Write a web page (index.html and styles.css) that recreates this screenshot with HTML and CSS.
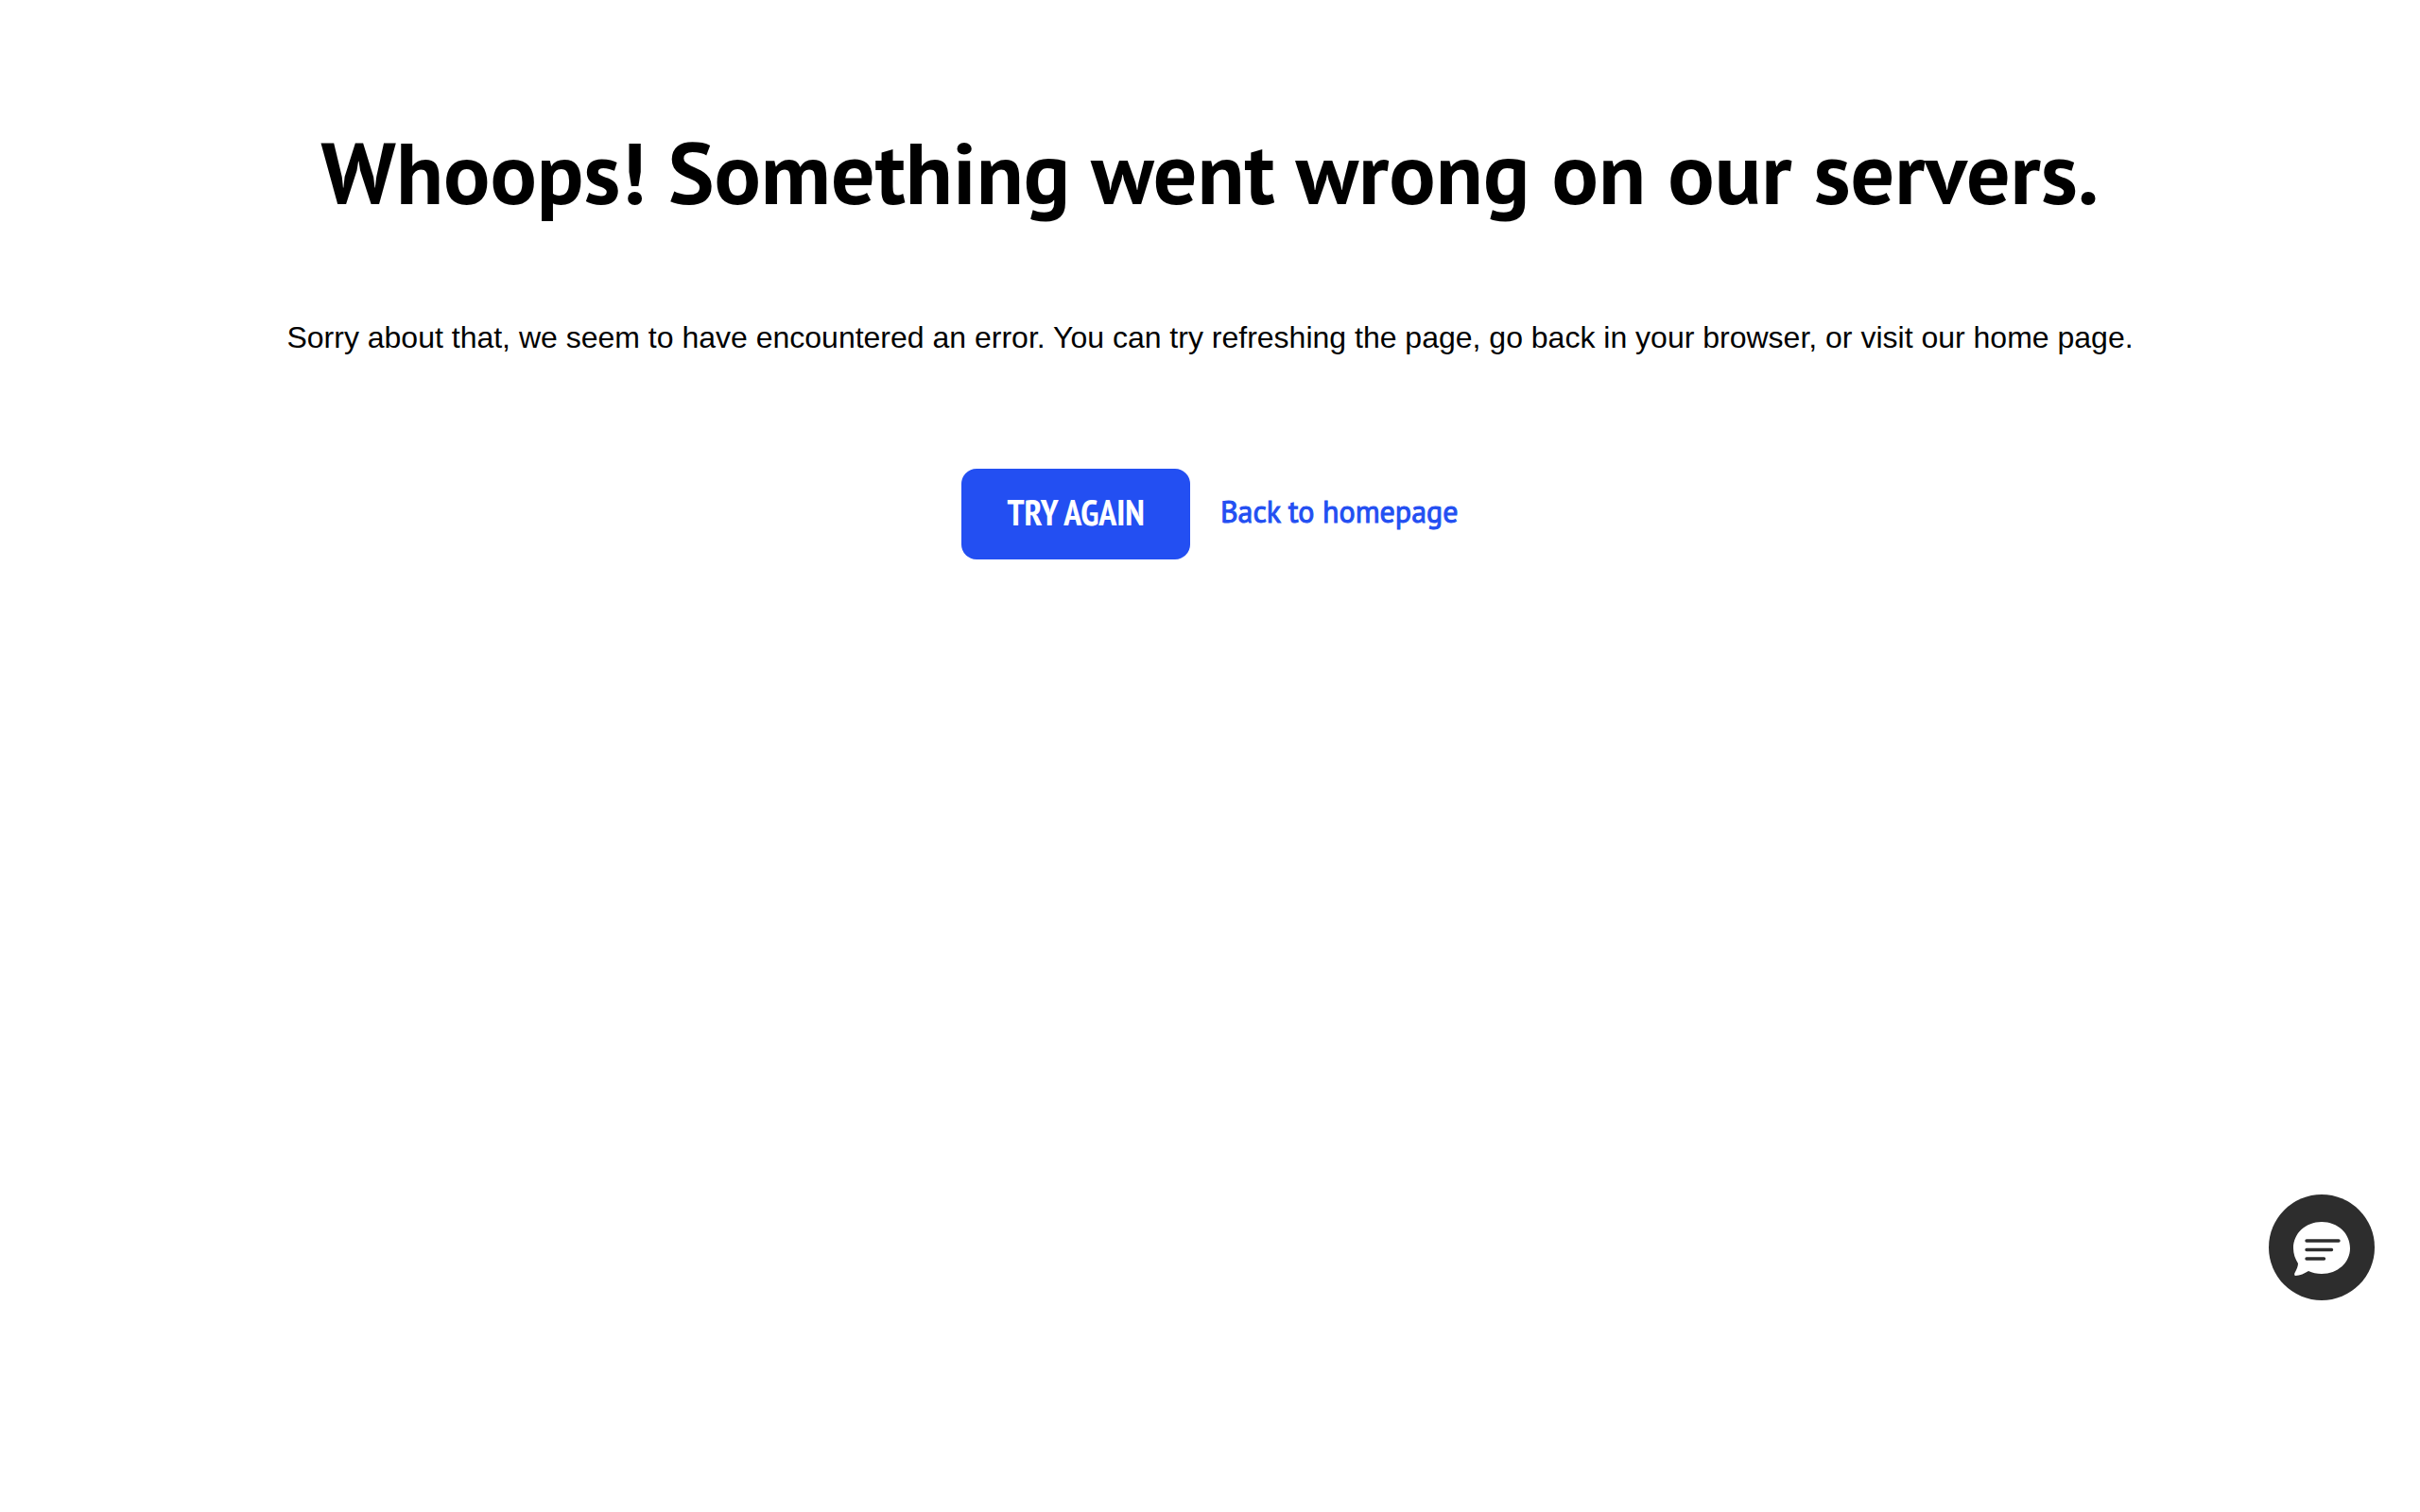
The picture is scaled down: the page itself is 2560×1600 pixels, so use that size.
FILE: index.html
```html
<!DOCTYPE html>
<html lang="en">
<head>
<meta charset="utf-8">
<meta name="viewport" content="width=device-width, initial-scale=1">
<title>Something went wrong</title>
<link rel="stylesheet" href="styles.css">
</head>
<body>
<main class="error-page">
  <h1 class="error-title">Whoops! Something went wrong on our servers.</h1>
  <p class="error-text">Sorry about that, we seem to have encountered an error. You can try refreshing the page, go back in your browser, or visit our home page.</p>
  <div class="error-actions">
    <button class="retry-button" type="button">TRY AGAIN</button>
    <a class="home-link" href="/">Back to homepage</a>
  </div>
</main>
<button class="chat-button" type="button" aria-label="Open chat">
  <svg class="chat-icon" viewBox="0 0 60 58" aria-hidden="true">
    <path fill="#fff" d="M30 0C47 0 60 12 60 28C60 43 47 55 30 55C25 55 20 54 16 52C12 54.500 7 57 2 57C1 56.500 1 55 1.500 54C3.500 50 5 47 5 44C2 39 0 34 0 28C0 12 13 0 30 0Z"/>
    <path fill="none" stroke="#2d2d2d" stroke-width="3.400" stroke-linecap="round" d="M14 20H48M14 29.500H40.500M14 39H32.500"/>
  </svg>
</button>
</body>
</html>
```
FILE: styles.css
```css
* {
  box-sizing: border-box;
}

body {
  margin: 0;
  background: #fff;
  color: #000;
  font-family: "Liberation Sans", Arial, sans-serif;
}

.error-page {
  display: flex;
  flex-direction: column;
  align-items: center;
  padding: 126px 48px 64px;
  text-align: center;
}

.error-title {
  margin: 0;
  font-family: "PT Sans", Lato, sans-serif;
  font-size: 92px;
  font-weight: 700;
  line-height: 112px;
}

.error-text {
  margin: 95px 0 0;
  font-size: 32px;
  line-height: 48px;
}

.error-actions {
  display: flex;
  align-items: center;
  gap: 32px;
  margin-top: 115px;
}

.retry-button {
  min-height: 96px;
  padding: 0 48px 5px;
  border: 0;
  border-radius: 16px;
  background: #234ff2;
  color: #fff;
  font-family: "PT Sans Narrow", "Roboto Condensed", "Open Sans Condensed", "PT Sans", sans-serif;
  font-size: 38px;
  font-weight: 700;
  cursor: pointer;
}

.home-link {
  padding-bottom: 6px;
  color: #234ff2;
  font-family: "PT Sans", Lato, sans-serif;
  font-size: 32px;
  font-weight: 400;
  line-height: 48px;
  text-decoration: none;
  -webkit-text-stroke: 1px currentColor;
}

.chat-button {
  position: fixed;
  right: 48px;
  bottom: 224px;
  display: grid;
  place-items: center;
  width: 112px;
  height: 112px;
  padding: 4px 0 0;
  border: 0;
  border-radius: 50%;
  background: #2d2d2d;
  cursor: pointer;
}

.chat-icon {
  width: 60px;
  height: 58px;
}
```
